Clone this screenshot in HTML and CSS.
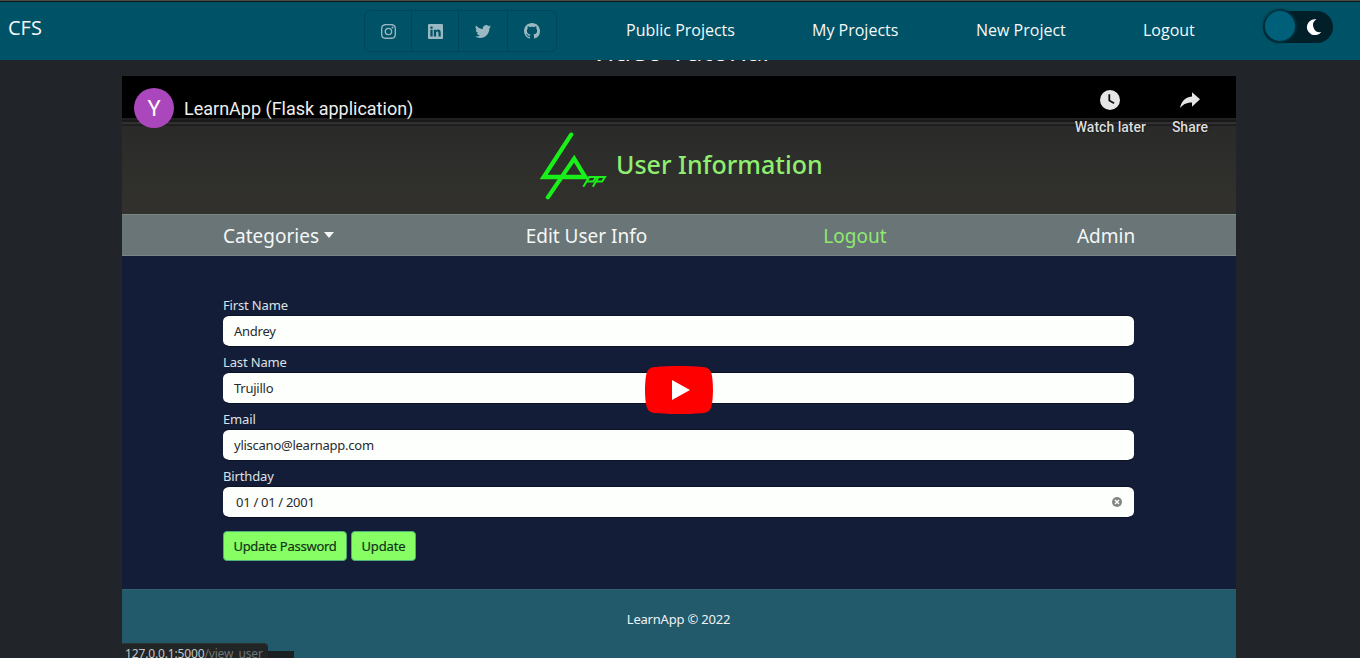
FILE: index.html
```html
<!DOCTYPE html>
<html lang="en">
<head>
<meta charset="utf-8">
<title>CFS</title>
<link rel="stylesheet" href="styles.css">
</head>
<body>
<header class="topbar">
  <a class="brand">CFS</a>
  <div class="social">
    <a class="social-link"><svg viewBox="0 0 16 16"><path d="M8 0C5.829 0 5.556.01 4.703.048 3.85.088 3.269.222 2.76.42a3.917 3.917 0 0 0-1.417.923A3.927 3.927 0 0 0 .42 2.76C.222 3.268.087 3.85.048 4.7.01 5.555 0 5.827 0 8.001c0 2.172.01 2.444.048 3.297.04.852.174 1.433.372 1.942.205.526.478.972.923 1.417.444.445.89.719 1.416.923.51.198 1.09.333 1.942.372C5.555 15.99 5.827 16 8 16s2.444-.01 3.298-.048c.851-.04 1.434-.174 1.943-.372a3.916 3.916 0 0 0 1.416-.923c.445-.445.718-.891.923-1.417.197-.509.332-1.09.372-1.942C15.99 10.445 16 10.173 16 8s-.01-2.445-.048-3.299c-.04-.851-.175-1.433-.372-1.941a3.926 3.926 0 0 0-.923-1.417A3.911 3.911 0 0 0 13.24.42c-.51-.198-1.092-.333-1.943-.372C10.443.01 10.172 0 7.998 0h.003zm-.717 1.442h.718c2.136 0 2.389.007 3.232.046.78.035 1.204.166 1.486.275.373.145.64.319.92.599.28.28.453.546.598.92.11.281.24.705.275 1.485.039.843.047 1.096.047 3.231s-.008 2.389-.047 3.232c-.035.78-.166 1.203-.275 1.485a2.47 2.47 0 0 1-.599.919c-.28.28-.546.453-.92.598-.28.11-.704.24-1.485.276-.843.038-1.096.047-3.232.047s-2.39-.009-3.233-.047c-.78-.036-1.203-.166-1.485-.276a2.478 2.478 0 0 1-.92-.598 2.48 2.48 0 0 1-.6-.92c-.109-.281-.24-.705-.275-1.485-.038-.843-.046-1.096-.046-3.233 0-2.136.008-2.388.046-3.231.036-.78.166-1.204.276-1.486.145-.373.319-.64.599-.92.28-.28.546-.453.92-.598.282-.11.705-.24 1.485-.276.738-.034 1.024-.044 2.515-.045v.002zm4.988 1.328a.96.96 0 1 0 0 1.92.96.96 0 0 0 0-1.92zm-4.27 1.122a4.109 4.109 0 1 0 0 8.217 4.109 4.109 0 0 0 0-8.217zm0 1.441a2.667 2.667 0 1 1 0 5.334 2.667 2.667 0 0 1 0-5.334z"/></svg></a>
    <a class="social-link"><svg viewBox="0 0 16 16"><path d="M0 1.146C0 .513.526 0 1.175 0h13.65C15.474 0 16 .513 16 1.146v13.708c0 .633-.526 1.146-1.175 1.146H1.175C.526 16 0 15.487 0 14.854V1.146zm4.943 12.248V6.169H2.542v7.225h2.401zm-1.2-8.212c.837 0 1.358-.554 1.358-1.248-.015-.709-.52-1.248-1.342-1.248-.822 0-1.359.54-1.359 1.248 0 .694.521 1.248 1.327 1.248h.016zm4.908 8.212V9.359c0-.216.016-.432.08-.586.173-.431.568-.878 1.232-.878.869 0 1.216.662 1.216 1.634v3.865h2.401V9.25c0-2.22-1.184-3.252-2.764-3.252-1.274 0-1.845.7-2.165 1.193v.025h-.016a5.54 5.54 0 0 1 .016-.025V6.169h-2.4c.03.678 0 7.225 0 7.225h2.4z"/></svg></a>
    <a class="social-link wide"><svg viewBox="0 0 16 16"><path d="M5.026 15c6.038 0 9.341-5.003 9.341-9.334 0-.14 0-.282-.006-.422A6.685 6.685 0 0 0 16 3.542a6.658 6.658 0 0 1-1.889.518 3.301 3.301 0 0 0 1.447-1.817 6.533 6.533 0 0 1-2.087.793A3.286 3.286 0 0 0 7.875 6.03a9.325 9.325 0 0 1-6.767-3.429 3.289 3.289 0 0 0 1.018 4.382A3.323 3.323 0 0 1 .64 6.575v.045a3.288 3.288 0 0 0 2.632 3.218 3.203 3.203 0 0 1-.865.115 3.23 3.23 0 0 1-.614-.057 3.283 3.283 0 0 0 3.067 2.277A6.588 6.588 0 0 1 .78 13.58a6.32 6.32 0 0 1-.78-.045A9.344 9.344 0 0 0 5.026 15z"/></svg></a>
    <a class="social-link wide"><svg viewBox="0 0 16 16"><path d="M8 0C3.58 0 0 3.58 0 8c0 3.54 2.29 6.53 5.47 7.59.4.07.55-.17.55-.38 0-.19-.01-.82-.01-1.49-2.01.37-2.53-.49-2.69-.94-.09-.23-.48-.94-.82-1.13-.28-.15-.68-.52-.01-.53.63-.01 1.08.58 1.23.82.72 1.21 1.87.87 2.33.66.07-.52.28-.87.51-1.07-1.78-.2-3.64-.89-3.64-3.95 0-.87.31-1.59.82-2.15-.08-.2-.36-1.02.08-2.12 0 0 .67-.21 2.2.82.64-.18 1.32-.27 2-.27.68 0 1.36.09 2 .27 1.53-1.04 2.2-.82 2.2-.82.44 1.1.16 1.92.08 2.12.51.56.82 1.27.82 2.15 0 3.07-1.87 3.75-3.65 3.95.29.25.54.73.54 1.48 0 1.07-.01 1.93-.01 2.2 0 .21.15.46.55.38A8.012 8.012 0 0 0 16 8c0-4.42-3.58-8-8-8z"/></svg></a>
  </div>
  <nav class="links">
    <a class="link-public">Public Projects</a>
    <a class="link-mine">My Projects</a>
    <a class="link-new">New Project</a>
    <a class="link-out">Logout</a>
  </nav>
  <div class="switch">
    <span class="knob"></span>
    <svg class="moon" viewBox="0 0 16 16"><path d="M10.5.3A8 8 0 1 0 15.3 13 6.900 6.900 0 0 1 10.500.3z"/></svg>
  </div>
</header>
<main class="page">
  <h2 class="heading"><span>Video Tutorial</span></h2>
  <section class="player">
    <div class="frame">
      <div class="frame-edge"></div>
      <div class="app-head">
        <svg class="logo" viewBox="0 0 204 210"><g fill="none" stroke="#19f019" stroke-linecap="round" stroke-linejoin="miter"><path stroke-width="13" d="M95 11 11 140H138L104 84 24 202"/><path stroke-width="6" stroke-linecap="butt" d="M132 170 150 140H171L162 154H143M161 170 178 140H198L189 154H171"/></g></svg>
        <span class="app-title">User Information</span>
      </div>
      <div class="app-nav">
        <span class="an-cat">Categories<i class="caret"></i></span>
        <span class="an-edit">Edit User Info</span>
        <span class="an-out">Logout</span>
        <span class="an-admin">Admin</span>
      </div>
      <div class="app-form">
        <div class="field"><span class="label">First Name</span><div class="input">Andrey</div></div>
        <div class="field"><span class="label">Last Name</span><div class="input">Trujillo</div></div>
        <div class="field"><span class="label">Email</span><div class="input">yliscano@learnapp.com</div></div>
        <div class="field"><span class="label">Birthday</span><div class="input date"><span>01<b>/</b>01<b>/</b>2001</span><svg class="clear" viewBox="0 0 10 10"><circle cx="5" cy="5" r="5" fill="#858585"/><path d="M3 3l4 4M7 3 3 7" stroke="#fff" stroke-width="1.4"/></svg></div></div>
        <div class="buttons"><span class="btn btn-pass">Update Password</span><span class="btn btn-up">Update</span></div>
      </div>
      <div class="app-foot"><span>LearnApp © 2022</span></div>
    </div>
    <div class="status"><span class="status-dark"></span><span class="status-url">127.0.0.1:5000<em>/view_user</em></span></div>
    <div class="overlay">
      <span class="avatar">Y</span>
      <span class="video-title">LearnApp (Flask application)</span>
      <div class="action later"><svg viewBox="0 0 20 20"><circle cx="10" cy="10" r="10" fill="#e6e6e6"/><path d="M9.3 4.2v6.3l4.8 2.7" fill="none" stroke="#111" stroke-width="1.8"/></svg><span>Watch later</span></div>
      <div class="action share"><svg viewBox="0 0 20 20"><path d="M12 2.2 20 9.3 12 16.8V12.4C6 12.4 2.4 14.6 0 18.2 .8 12.6 4.5 7.1 12 6.4z" fill="#e6e6e6"/></svg><span>Share</span></div>
    </div>
    <svg class="play" viewBox="0 0 68 48"><path d="M66.52 7.74c-.78-2.93-2.49-5.41-5.42-6.19C55.79.13 34 0 34 0S12.21.13 6.9 1.55c-2.93.78-4.63 3.26-5.42 6.19C.06 13.05 0 24 0 24s.06 10.95 1.48 16.26c.78 2.93 2.49 5.41 5.42 6.19C12.21 47.87 34 48 34 48s21.79-.13 27.1-1.55c2.93-.78 4.64-3.26 5.42-6.19C67.94 34.95 68 24 68 24s-.06-10.95-1.48-16.26z" fill="red"/><path d="M45 24 27 14v20" fill="#fff"/></svg>
  </section>
</main>
</body>
</html>
```
FILE: styles.css
```css
* { box-sizing: border-box; }
body { margin: 0; height: 658px; overflow: hidden; background: #212529; color: #fff; font-family: "Noto Sans", "Open Sans", sans-serif; }
.topbar { position: fixed; inset: 0 0 auto 0; z-index: 5; height: 60px; display: flex; align-items: flex-start; background: #005266; border-top: 1px solid #4b4b47; box-shadow: inset 0 1px #10191c; font-family: "Open Sans", "Noto Sans", sans-serif; font-size: 16px; line-height: 24px; color: #f5f8f9; }
.brand { width: 364px; padding: 12px 0 0 8px; font-size: 20px; line-height: 30px; }
.social { display: flex; width: 193px; height: 42px; margin-top: 9px; border: 1px solid #00465a; border-radius: 6px; }
.social-link { width: 47px; display: flex; align-items: center; justify-content: center; border-right: 1px solid #00465a; }
.social-link.wide { width: 49px; }
.social-link:last-child { border-right: 0; width: 48px; }
.social-link svg { width: 15px; height: 15px; fill: #99b8c1; }
.social-link.wide svg { width: 16px; height: 16px; }
.links { display: flex; gap: 77px; margin-left: 69px; padding-top: 17px; white-space: nowrap; }
.link-public { width: 109px; }
.link-mine { width: 87px; }
.link-new { width: 90px; }
.link-out { width: 52px; }
.switch { display: flex; align-items: center; justify-content: space-between; width: 70px; height: 32px; margin: 10px 0 0 68px; padding: 0 11px 0 2px; border-radius: 16px; background: #001f29; }
.knob { width: 30px; height: 30px; margin-top: -2px; border-radius: 50%; background: #006079; box-shadow: 0 0 2px 2px #00303d; }
.moon { width: 16px; height: 16px; fill: #fff; }
.page { padding-top: 31px; }
.heading { margin: 0 0 7px; height: 38px; text-align: center; font-family: "Open Sans", sans-serif; font-size: 28px; line-height: 38px; font-weight: 500; letter-spacing: -.2px; }
.player { position: relative; width: 1114px; height: 582px; margin-left: 122px; overflow: hidden; background: #000; }
.frame { padding-top: 42px; }
.frame-edge { height: 8px; background: linear-gradient(#202020 0 2px, #191919 2px 4px, #313131 4px 6px, #111 7px, #292929 8px); }
.app-head { height: 88px; display: flex; align-items: flex-start; padding: 5px 0 0 418px; background: linear-gradient(#2a2b29, #32312e); }
.logo { width: 67px; height: 69px; }
.app-title { margin: 13px 0 0 9px; font-size: 25px; line-height: 40px; font-weight: 500; color: #8fee70; white-space: nowrap; }
.app-nav { height: 42px; display: flex; justify-content: space-between; padding: 0 102px 0 101px; background: #697576; border-top: 1px solid #7b8584; border-bottom: 1px solid #7b8584; font-size: 19px; line-height: 42px; color: #f4f7f6; white-space: nowrap; }
.an-cat { width: 112px; display: flex; gap: 5px; }
.an-edit { width: 120px; margin-left: 13px; }
.an-out { width: 63px; margin-right: 13px; color: #8eea70; }
.an-admin { width: 57px; }
.caret { height: 6px; margin-top: 17px; border: 5.5px solid transparent; border-top: 6px solid #f4f7f6; border-bottom: 0; }
.app-form { height: 333px; padding: 39px 102px 0 101px; background: #141d37; font-size: 13px; letter-spacing: -.15px; white-space: nowrap; }
.field { height: 57px; }
.label { display: block; height: 20px; line-height: 20px; color: #dde1e5; }
.input { height: 32px; border: 1px solid #0c1226; border-width: 1px 0; border-radius: 6px; padding: 0 11px; line-height: 30px; background: #fdfffc; background-clip: padding-box; color: #28292d; letter-spacing: -.25px; }
.date { display: flex; align-items: center; justify-content: space-between; padding-left: 13px; }
.date b { font-weight: 400; padding: 0 3px; }
.clear { width: 10px; height: 10px; margin-right: 1px; }
.buttons { display: flex; gap: 4px; padding-top: 8px; }
.btn { height: 30px; line-height: 29px; border: 1px solid #4fae7a; border-radius: 4px; background: #87ff64; color: #143318; text-align: center; letter-spacing: -.25px; -webkit-text-stroke: .2px; }
.btn-pass { width: 124px; }
.btn-up { width: 65px; letter-spacing: -.1px; }
.app-foot { height: 69px; background: #22596b; border-top: 1px solid #2f6070; text-align: center; font-size: 13px; line-height: 58px; letter-spacing: -.2px; color: #eef3f4; padding-right: 1px; }
.status { position: absolute; left: 0; bottom: 0; width: 172px; height: 15px; overflow: hidden; font-size: 12px; line-height: 19px; letter-spacing: -.15px; color: #c4c6c6; }
.status-dark { position: absolute; inset: 8px 0 0 0; background: #1b2022; }
.status-url { position: absolute; inset: 0 auto auto 0; width: 146px; height: 20px; padding-left: 3px; background: #212526; border-top: 1px solid #2d3233; border-radius: 0 4px 0 0; white-space: nowrap; }
.status-url em { font-style: normal; color: #707373; }
.overlay { position: absolute; inset: 0 0 auto 0; height: 70px; display: flex; padding: 12px 28px 0 12px; font-family: Roboto, sans-serif; white-space: nowrap; }
.avatar { width: 40px; height: 40px; border-radius: 50%; background: #ab47bc; text-align: center; font-size: 22px; line-height: 41px; }
.video-title { margin-left: 10px; font-size: 18px; line-height: 41px; color: #eee; }
.action { display: flex; flex-direction: column; align-items: center; padding-top: 2px; font-size: 14px; line-height: 16px; font-weight: 500; color: #dedede; text-shadow: 0 0 2px #000; }
.action svg { width: 20px; height: 20px; margin-bottom: 9px; }
.later { margin-left: auto; }
.share { margin-left: 26px; }
.play { position: absolute; left: 523px; top: 290px; width: 68px; height: 48px; }
```
